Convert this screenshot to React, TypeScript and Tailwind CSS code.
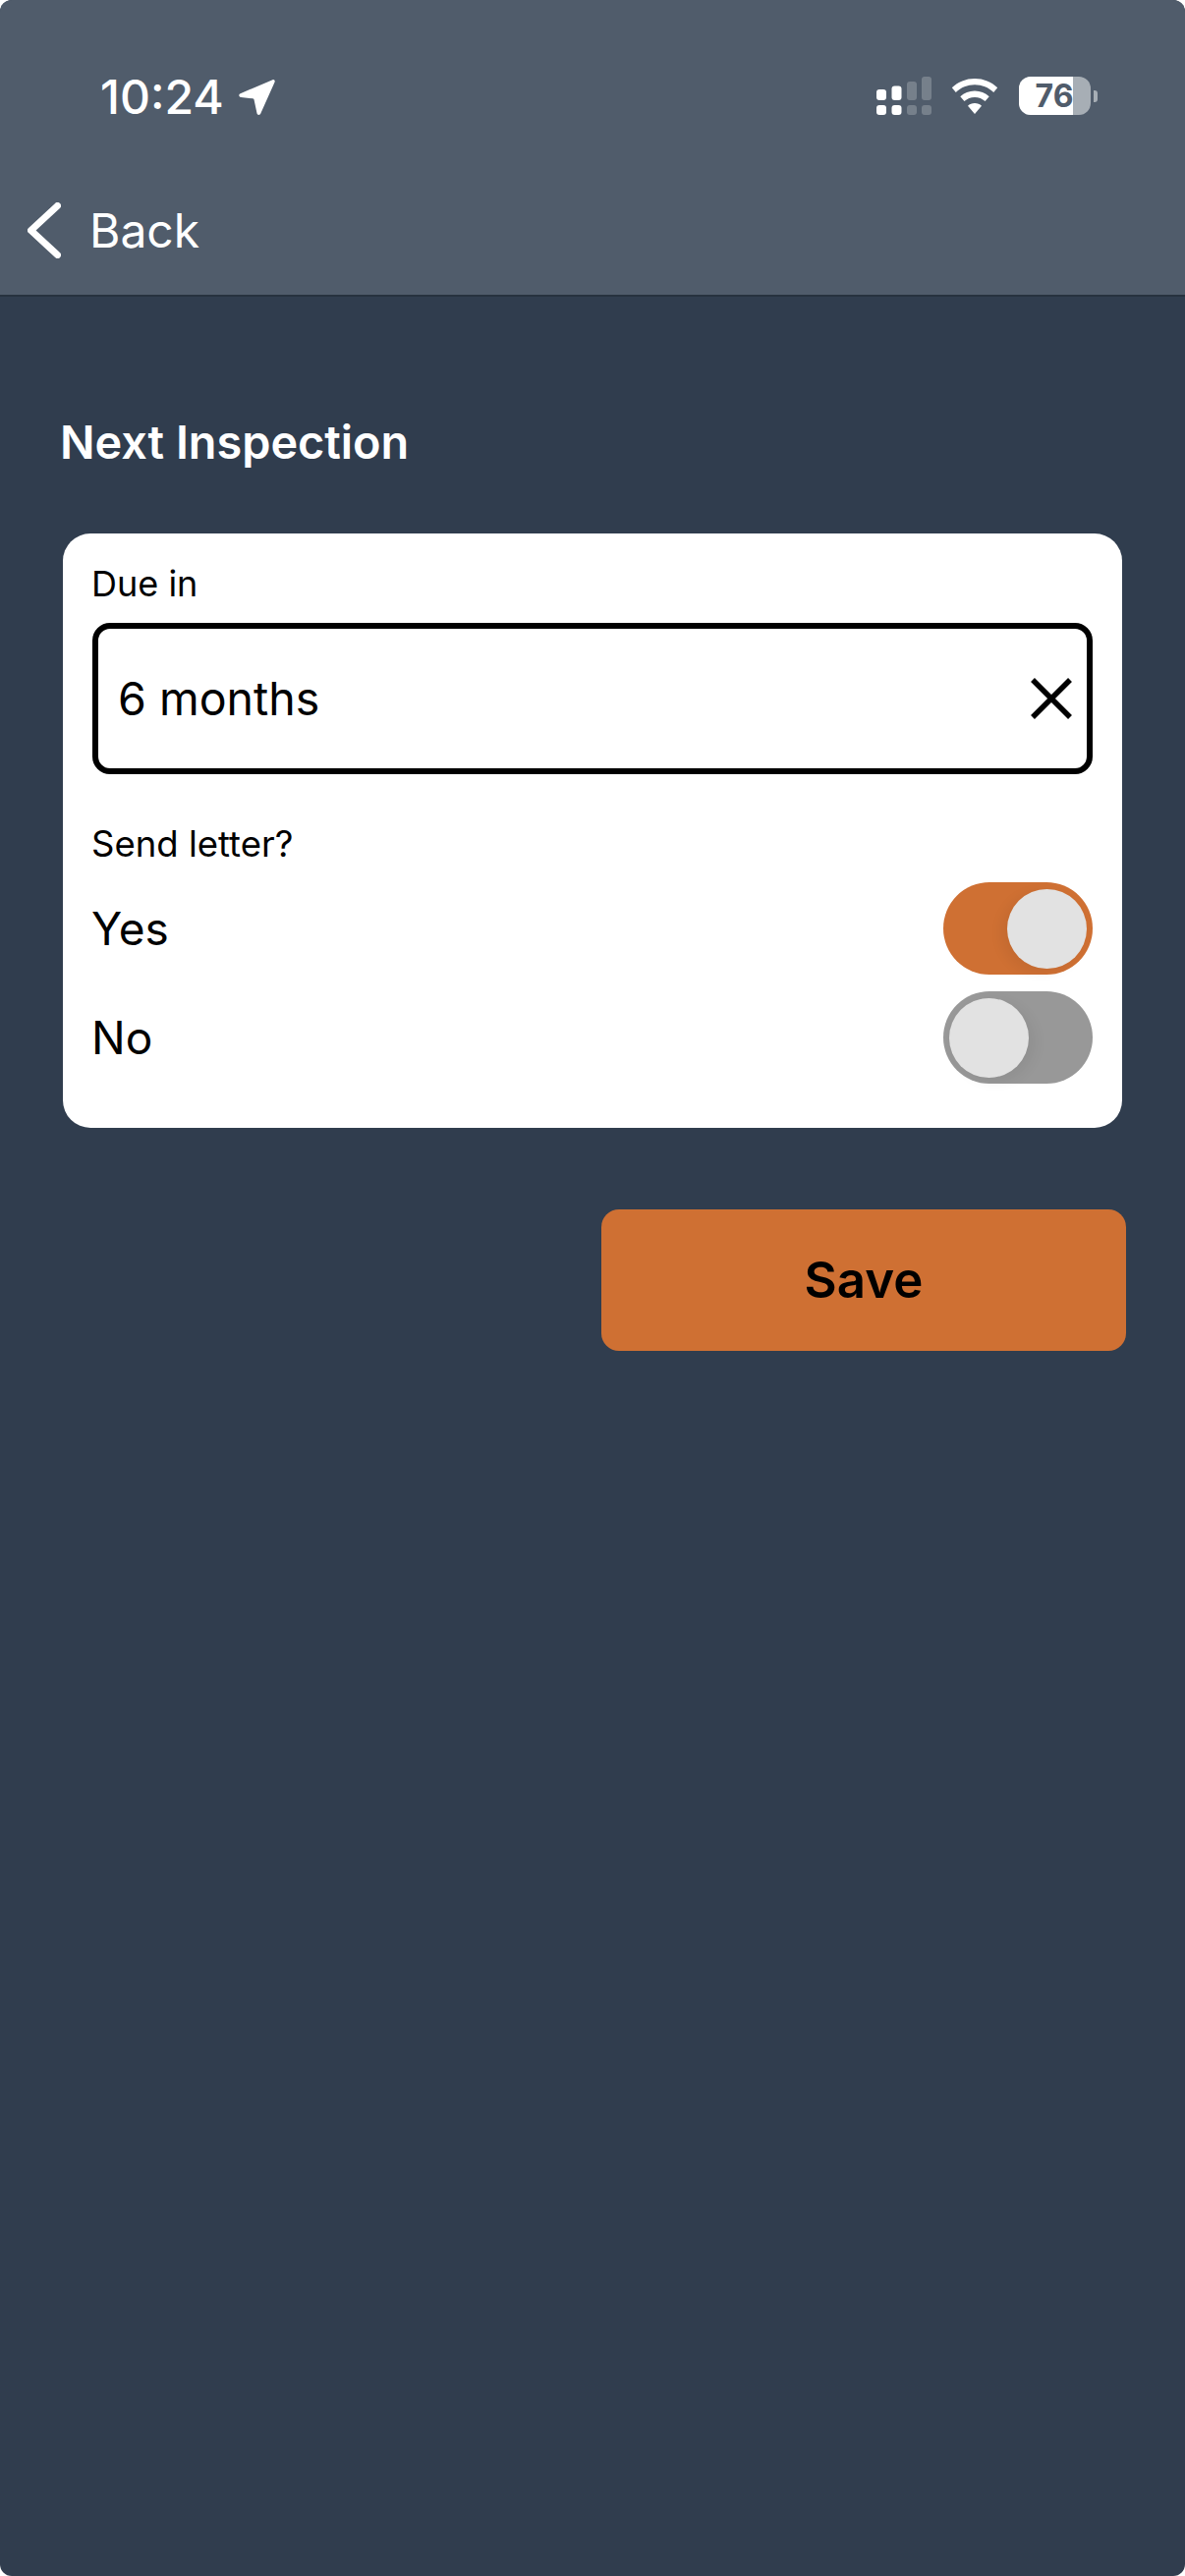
export default function App() {
  return (
    <div className="h-[2622px] w-[1206px] overflow-hidden bg-white font-['Inter',sans-serif]">
      <div className="flex h-full flex-col overflow-hidden rounded-[12px] bg-[#303d4e]">
        <header className="h-[302px] shrink-0 border-b-2 border-[#27323f] bg-[#505c6b]">
          <div className="flex h-[150px] items-start pt-[73px] pr-[89px] pl-[102px]">
            <div className="flex flex-1 items-center gap-[14px]">
              <span className="text-[48px] leading-[52px] font-medium text-white">10:24</span>
              <svg width="38" height="38" viewBox="0 0 38 38" className="shrink-0">
                <path d="M35.5 1.2 2.6 15.2c-2 .9-1.6 3.6.6 3.9l12 1.2c.8.1 1.3.6 1.4 1.4l2.9 13.6c.4 2.2 3 2.3 3.8.3L37.6 3.400c.5-1.500-.8-2.800-2.100-2.200Z" fill="#ffffff" />
              </svg>
            </div>
            <div className="mt-[5px] flex items-center">
              <svg width="56" height="39" viewBox="0 0 56 39" className="mr-[20px] shrink-0">
                <g fill="#ffffff">
                  <rect x="0" y="13" width="10" height="11" rx="3" />
                  <rect x="15.500" y="9.500" width="10" height="14.500" rx="3" />
                  <rect x="0" y="29" width="10" height="10" rx="3" />
                  <rect x="15.500" y="29" width="10" height="10" rx="3" />
                </g>
                <g fill="#ffffff" opacity="0.22">
                  <rect x="31" y="5" width="10" height="19" rx="3" />
                  <rect x="46" y="0" width="10" height="24" rx="3" />
                  <rect x="31" y="29" width="10" height="10" rx="3" />
                  <rect x="46" y="29" width="10" height="10" rx="3" />
                </g>
              </svg>
              <svg width="48" height="36" viewBox="0 0 48 36" className="mr-[21px] shrink-0">
                <path d="M24 0C15 0 7 3.400.8 9.200l4 4.700C10 9 16.600 6.200 24 6.200s14 2.800 19.200 7.700l4-4.700C41 3.400 33 0 24 0Z" fill="#ffffff" />
                <path d="M24 12.500c-5.700 0-10.800 2.200-14.700 5.800l4.100 4.700c2.800-2.500 6.500-4.100 10.600-4.100s7.800 1.600 10.600 4.100l4.100-4.700c-3.900-3.600-9-5.800-14.700-5.800Z" fill="#ffffff" />
                <path d="M24 25c-2.800 0-5.200 1-7 2.700L24 36l7-8.300C29.200 26 26.800 25 24 25Z" fill="#ffffff" />
              </svg>
              <div className="relative flex h-[39px] w-[73px] shrink-0 items-center justify-center overflow-hidden rounded-[12px] bg-[#a7aeb5]">
                <div className="absolute top-0 bottom-0 left-0 w-[55px] bg-white" />
                <span className="relative pr-[1px] text-[32px] leading-[39px] font-bold text-[#505c6b]">76</span>
              </div>
              <div className="ml-[3px] h-[12px] w-[4px] shrink-0 rounded-r-[3px] bg-[#a7aeb5]" />
            </div>
          </div>
          <div className="flex items-start pt-[56px] pl-[28px]">
            <div className="flex items-center">
              <svg width="34" height="57" viewBox="0 0 34 57" className="shrink-0">
                <path d="M30.500 3.500 3.500 28.500l27 25" fill="none" stroke="#ffffff" strokeWidth="7" strokeLinecap="round" strokeLinejoin="round" />
              </svg>
              <span className="ml-[29px] text-[48px] leading-[57px] font-normal text-white">Back</span>
            </div>
          </div>
        </header>
        <main className="flex-1 pt-[119px] pr-[60px] pl-[61px]">
          <h1 className="text-[46.800px] leading-[58px] font-semibold text-white">Next Inspection</h1>
          <section className="mt-[64px] ml-[3px] w-[1078px] rounded-[28px] bg-white pt-[30px] pr-[30px] pl-[30px]">
            <div className="-ml-[1px] text-[36px] leading-[42px] text-black">Due in</div>
            <div className="mt-[19px] flex h-[154px] items-center justify-between rounded-[18px] border-[6px] border-black pr-[14px] pl-[22px]">
              <span className="-ml-[2px] text-[46.500px] leading-[58px] text-black">6 months</span>
              <svg width="44" height="44" viewBox="0 0 44 44" className="shrink-0">
                <path d="M3 3l38 38M41 3 3 41" fill="none" stroke="#000000" strokeWidth="5.500" />
              </svg>
            </div>
            <div className="mt-[50px] -ml-[1px] text-[36.500px] leading-[42px] text-black">Send letter?</div>
            <div className="mt-[18px] flex h-[94px] items-center justify-between">
              <span className="-ml-[1px] text-[46px] leading-[58px] text-black">Yes</span>
              <div className="flex h-[94px] w-[152px] items-center justify-end rounded-full bg-[#cf7033] pr-[6px]">
                <div className="h-[81px] w-[81px] rounded-full bg-[#e2e2e2] shadow-[-6px_4px_14px_rgba(0,0,0,0.06)]" />
              </div>
            </div>
            <div className="mt-[17px] flex h-[94px] items-center justify-between">
              <span className="-ml-[1px] text-[46px] leading-[58px] text-black">No</span>
              <div className="flex h-[94px] w-[152px] items-center justify-start rounded-full bg-[#989898] pl-[6px]">
                <div className="h-[81px] w-[81px] rounded-full bg-[#e2e2e2] shadow-[6px_4px_14px_rgba(0,0,0,0.06)]" />
              </div>
            </div>
            <div className="h-[45px]" />
          </section>
          <div className="mt-[83px] flex justify-end">
            <button className="flex h-[144px] w-[534px] items-center justify-center rounded-[18px] bg-[#cf7033] text-[51px] font-semibold text-black">Save</button>
          </div>
        </main>
      </div>
    </div>
  );
}
